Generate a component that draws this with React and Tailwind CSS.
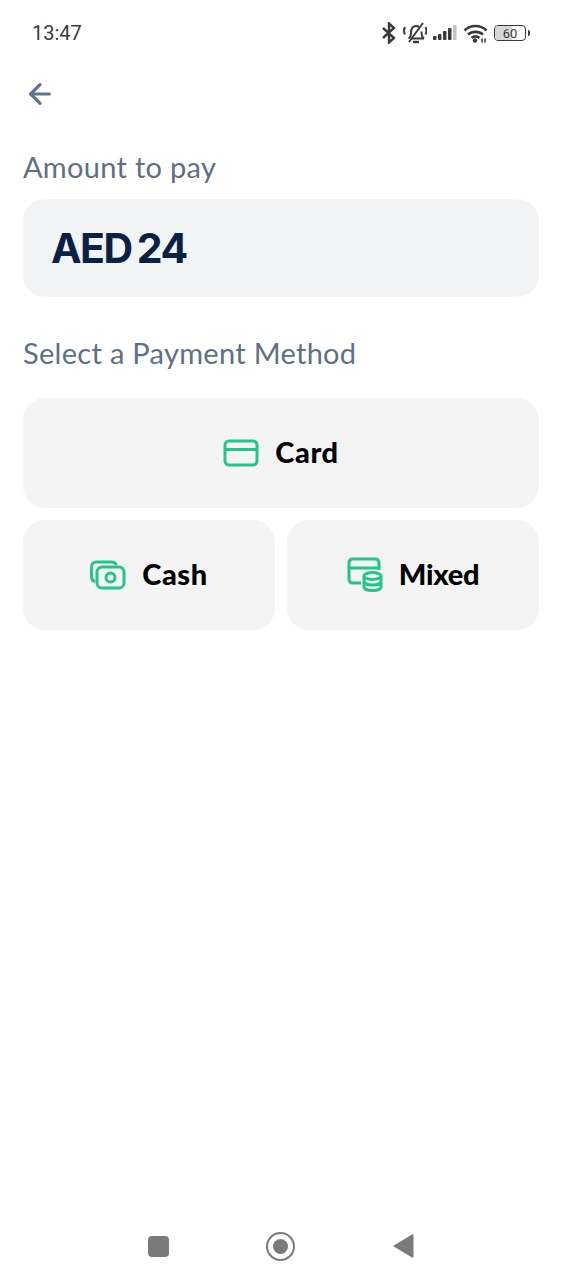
import { ArrowLeft } from "lucide-react";

function StatusIcons() {
  return (
    <div className="flex items-center text-[#3a3a3a]">
      <svg width="16" height="22" viewBox="0 0 16 22" fill="none" stroke="currentColor" strokeWidth="2.4">
        <path d="M2 6l11 10-5 4.500V1.500L13 6 2 16" />
      </svg>
      <svg className="ml-[6px]" width="24" height="22" viewBox="0 0 24 22" fill="none" stroke="currentColor" strokeWidth="2">
        <path d="M5.500 16.500c1.700-1 2.500-2.500 2.500-5.500 0-4.500 2-7 5-7 1.200 0 2.200.4 3 1.200M18.500 9.500c0 3.500.5 6 2.500 7H9" />
        <path d="M10 20h6" strokeWidth="2.400" />
        <path d="M20 1L6 20M2 5c-1.300 2.500-1.300 5 0 7.500M22.500 5c1.300 2.500 1.300 5 0 7.500" />
      </svg>
      <svg className="ml-[6px]" width="24" height="16" viewBox="0 0 24 16" fill="currentColor">
        <rect x="0" y="11" width="3.500" height="4" rx="1" />
        <rect x="5" y="9" width="3.500" height="6" rx="1" />
        <rect x="10" y="6" width="3.500" height="9" rx="1" />
        <rect x="15" y="3" width="3.500" height="12" rx="1" />
        <rect x="20" y="0" width="3.500" height="15" rx="1" fill="#c4c4c4" />
      </svg>
      <svg className="ml-[6px]" width="25" height="19" viewBox="0 0 25 19" fill="none" stroke="currentColor" strokeWidth="2.600">
        <path d="M1.500 6.500c6-6 16-6 22 0M5 10.500c4-3.500 11-3.500 15 0M8.500 14c2.500-2 5.500-2 8 0" />
        <circle cx="12" cy="16.500" r="2.200" fill="currentColor" stroke="none" />
        <path d="M19 14.500v4M22 14.500v4" strokeWidth="1.600" />
      </svg>
      <div className="relative ml-[6px] flex h-[16px] w-[32px] items-center justify-center overflow-hidden rounded-[4px] border-[1.500px] border-[#3a3a3a] font-['Roboto',sans-serif] text-[13px] leading-none">
        <div className="absolute inset-y-0 left-0 w-[17px] bg-[#d6d6d6]" />
        <span className="relative">60</span>
      </div>
      <div className="ml-[2px] h-[6px] w-[2px] rounded-r-sm bg-[#3a3a3a]" />
    </div>
  );
}

function CardIcon() {
  return (
    <svg width="36" height="28" viewBox="0 0 36 28" fill="none" stroke="#22c58b" strokeWidth="3">
      <rect x="2" y="2" width="32" height="24" rx="4" />
      <path d="M2 10.500h32" />
    </svg>
  );
}

function CashIcon() {
  return (
    <svg width="36" height="30" viewBox="0 0 36 30" fill="none" stroke="#22c58b" strokeWidth="3">
      <path d="M5 21.500c-2-.5-3.500-2-3.500-4.500V7c0-3 2-5 5-5h15c2.500 0 4 1 5 3" />
      <rect x="7" y="7" width="27" height="21" rx="5" />
      <circle cx="20.500" cy="17.500" r="4.500" />
    </svg>
  );
}

function MixedIcon() {
  return (
    <svg width="36" height="36" viewBox="0 0 36 36" fill="none" stroke="#22c58b" strokeWidth="3">
      <path d="M14 26H6c-2.500 0-4-1.500-4-4V6c0-2.500 1.500-4 4-4h22c2.500 0 4 1.500 4 4v7" />
      <path d="M2 11h30" />
      <ellipse cx="25.500" cy="19" rx="8.500" ry="3.500" />
      <path d="M17 19v11c0 2 3.500 3.500 8.500 3.500s8.500-1.500 8.500-3.500V19M17 24.500c0 2 3.500 3.500 8.500 3.500s8.500-1.500 8.500-3.500" />
    </svg>
  );
}

function Method({ icon, label, tracking }) {
  return (
    <button className="flex h-[110px] w-full items-center justify-center gap-[16px] rounded-[22px] bg-[#f4f4f4]">
      {icon}
      <span className={`pb-[3px] text-[29px] leading-none font-black text-black ${tracking}`}>{label}</span>
    </button>
  );
}

export default function App() {
  return (
    <div className="flex h-[1280px] w-full flex-col bg-white font-['Lato',sans-serif]">
      <div className="flex h-[66px] items-center justify-between px-[32px]">
        <span className="font-['Roboto',sans-serif] text-[20px] text-[#3a3a3a]">13:47</span>
        <StatusIcons />
      </div>

      <div className="flex flex-1 flex-col px-[23px]">
        <div className="mt-[12px] flex h-[32px] items-center">
          <ArrowLeft className="ml-[1px] text-[#5f7391]" size={32} strokeWidth={2.4} />
        </div>

        <p className="mt-[40px] text-[29px] leading-[34px] tracking-[0.3px] text-[#5f6f85]">Amount to pay</p>
        <div className="mt-[15px] flex h-[98px] items-center rounded-[22px] bg-[#f1f3f5] px-[28px]">
          <span className="pt-[1px] font-['Inter',sans-serif] text-[41px] leading-none font-bold tracking-[-1.5px] [word-spacing:-3px] text-[#0a2145]">AED 24</span>
        </div>

        <p className="mt-[39px] text-[29px] leading-[34px] tracking-[0.3px] text-[#5f6f85]">Select a Payment Method</p>
        <div className="mt-[28px] flex flex-col gap-[12px]">
          <Method icon={<CardIcon />} label="Card" tracking="tracking-[0.6px]" />
          <div className="grid grid-cols-2 gap-[12px]">
            <Method icon={<CashIcon />} label="Cash" tracking="tracking-[0.6px]" />
            <Method icon={<MixedIcon />} label="Mixed" tracking="tracking-[-0.3px]" />
          </div>
        </div>
      </div>

      <div className="mb-[20px] flex h-[28px] items-center justify-center">
        <div className="h-[21px] w-[21px] rounded-[4px] bg-[#7a7a7a]" />
        <div className="ml-[97px] flex h-[29px] w-[29px] items-center justify-center rounded-full border-[2.500px] border-[#7a7a7a]">
          <div className="h-[15px] w-[15px] rounded-full bg-[#7a7a7a]" />
        </div>
        <svg className="ml-[97px]" width="22" height="24" viewBox="0 0 22 24" fill="#7a7a7a">
          <path d="M20 .500c.8-.5 1.500 0 1.500 1v21c0 1-.7 1.500-1.500 1L1 12z" />
        </svg>
      </div>
    </div>
  );
}
